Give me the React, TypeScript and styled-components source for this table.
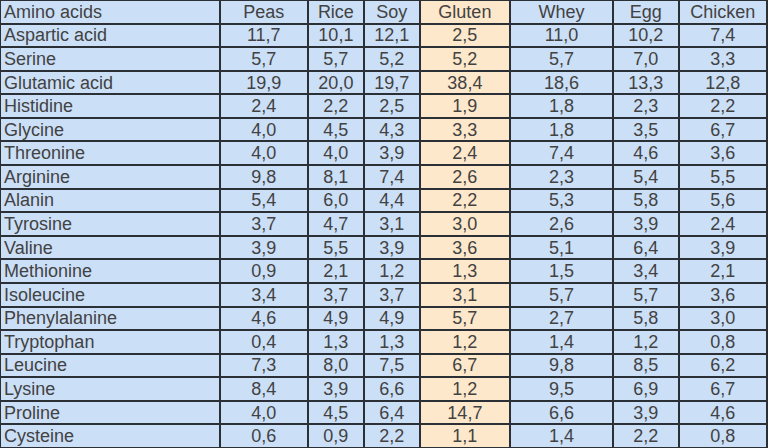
import React from 'react'
import styled, { createGlobalStyle } from 'styled-components'

const GlobalStyle = createGlobalStyle`
  html, body {
    margin: 0;
    padding: 0;
    background: #ffffff;
  }
  body {
    font-family: "Liberation Sans", Arial, sans-serif;
  }
`

const Grid = styled.div`
  box-sizing: border-box;
  width: 768px;
  height: 448px;
  display: grid;
  grid-template-columns: 222fr 88fr 55fr 55fr 90fr 103fr 65fr 88fr;
  grid-template-rows: repeat(19, 1fr);
  gap: 2px;
  background: #2b3036;
  border: 1px solid #2b3036;
  border-right-width: 2px;
`

const Cell = styled.div<{ $highlight?: boolean; $label?: boolean }>`
  display: flex;
  align-items: center;
  justify-content: ${({ $label }) => ($label ? 'flex-start' : 'center')};
  padding-left: ${({ $label }) => ($label ? '3px' : '0')};
  background: ${({ $highlight }) => ($highlight ? '#fde8cb' : '#cbdff7')};
  color: #424242;
  font-size: 18px;
  line-height: 1;
  white-space: nowrap;
  overflow: hidden;
`

const columns = ['Peas', 'Rice', 'Soy', 'Gluten', 'Whey', 'Egg', 'Chicken']
const highlightIndex = 3

const rows: [string, string[]][] = [
  ['Aspartic acid', ['11,7', '10,1', '12,1', '2,5', '11,0', '10,2', '7,4']],
  ['Serine', ['5,7', '5,7', '5,2', '5,2', '5,7', '7,0', '3,3']],
  ['Glutamic acid', ['19,9', '20,0', '19,7', '38,4', '18,6', '13,3', '12,8']],
  ['Histidine', ['2,4', '2,2', '2,5', '1,9', '1,8', '2,3', '2,2']],
  ['Glycine', ['4,0', '4,5', '4,3', '3,3', '1,8', '3,5', '6,7']],
  ['Threonine', ['4,0', '4,0', '3,9', '2,4', '7,4', '4,6', '3,6']],
  ['Arginine', ['9,8', '8,1', '7,4', '2,6', '2,3', '5,4', '5,5']],
  ['Alanin', ['5,4', '6,0', '4,4', '2,2', '5,3', '5,8', '5,6']],
  ['Tyrosine', ['3,7', '4,7', '3,1', '3,0', '2,6', '3,9', '2,4']],
  ['Valine', ['3,9', '5,5', '3,9', '3,6', '5,1', '6,4', '3,9']],
  ['Methionine', ['0,9', '2,1', '1,2', '1,3', '1,5', '3,4', '2,1']],
  ['Isoleucine', ['3,4', '3,7', '3,7', '3,1', '5,7', '5,7', '3,6']],
  ['Phenylalanine', ['4,6', '4,9', '4,9', '5,7', '2,7', '5,8', '3,0']],
  ['Tryptophan', ['0,4', '1,3', '1,3', '1,2', '1,4', '1,2', '0,8']],
  ['Leucine', ['7,3', '8,0', '7,5', '6,7', '9,8', '8,5', '6,2']],
  ['Lysine', ['8,4', '3,9', '6,6', '1,2', '9,5', '6,9', '6,7']],
  ['Proline', ['4,0', '4,5', '6,4', '14,7', '6,6', '3,9', '4,6']],
  ['Cysteine', ['0,6', '0,9', '2,2', '1,1', '1,4', '2,2', '0,8']],
]

export default function App() {
  return (
    <>
      <GlobalStyle />
      <Grid>
        <Cell $label>Amino acids</Cell>
        {columns.map((c, i) => (
          <Cell key={c} $highlight={i === highlightIndex}>
            {c}
          </Cell>
        ))}
        {rows.map(([name, values]) => (
          <React.Fragment key={name}>
            <Cell $label>{name}</Cell>
            {values.map((v, i) => (
              <Cell key={i} $highlight={i === highlightIndex}>
                {v}
              </Cell>
            ))}
          </React.Fragment>
        ))}
      </Grid>
    </>
  )
}
